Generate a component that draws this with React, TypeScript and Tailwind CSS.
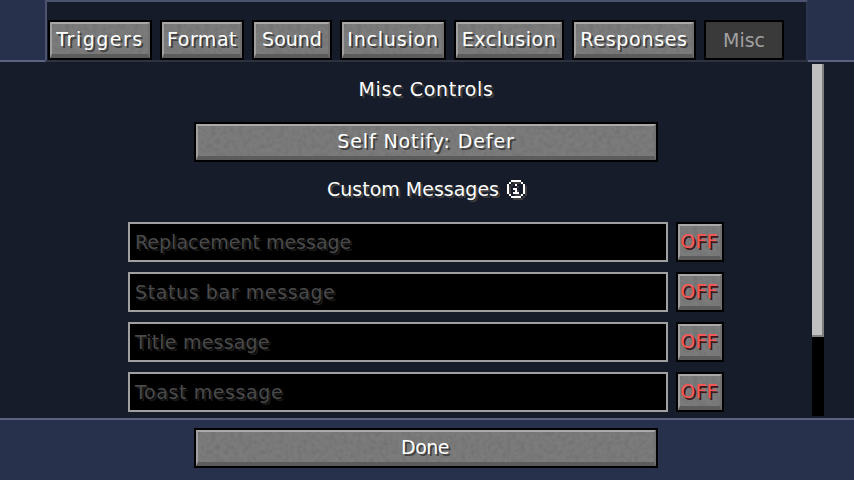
import React from 'react';

const tabs = [
  { label: 'Triggers', width: 'w-[104px]', tracking: 'tracking-[1.5px]' },
  { label: 'Format', width: 'w-[84px]', tracking: 'tracking-[0.5px]' },
  { label: 'Sound', width: 'w-[80px]', tracking: 'tracking-[0px]' },
  { label: 'Inclusion', width: 'w-[106px]', tracking: 'tracking-[0.8px]' },
  { label: 'Exclusion', width: 'w-[110px]', tracking: 'tracking-[0.55px]' },
  { label: 'Responses', width: 'w-[124px]', tracking: 'tracking-[0.7px]' },
];

const messages = [
  { label: 'Replacement message', tracking: 'tracking-[0px]' },
  { label: 'Status bar message', tracking: 'tracking-[0.6px]' },
  { label: 'Title message', tracking: 'tracking-[0.2px]' },
  { label: 'Toast message', tracking: 'tracking-[0.6px]' },
];

function Grain() {
  return (
    <svg className="absolute inset-0 w-full h-full">
      <filter id="stone">
        <feTurbulence type="fractalNoise" baseFrequency="0.22" numOctaves={2} seed={4} />
        <feColorMatrix values="0 0 0 0 0  0 0 0 0 0  0 0 0 0 0  1.6 0 0 0 -0.62" />
      </filter>
      <rect width="100%" height="100%" filter="url(#stone)" opacity="0.1" />
    </svg>
  );
}

function McButton({ className, children }: { className: string; children: React.ReactNode }) {
  return (
    <div className={`relative h-[40px] shrink-0 border-2 border-black ${className}`}>
      <div className="relative h-full bg-[#7b7b7b] border-t-2 border-l-2 border-r-2 border-b-4 border-t-[#a9a9a9] border-l-[#a0a0a0] border-r-[#717171] border-b-[#5c5c5c] flex items-center justify-center overflow-hidden">
        <Grain />
        {children}
      </div>
    </div>
  );
}

function InfoIcon() {
  // pixel ring with an i, on a 2px grid
  const ring = 'M2 0h5v1h1v1h1v5h-1v1h-1v1h-5v-1h-1v-1h-1v-5h1v-1h1zM2 1v1h-1v5h1v1h5v-1h1v-5h-1v-1z';
  const dot = 'M4 2h1v1h-1zM3 4h2v2h1v1h-3v-1h1v-1h-1z';
  return (
    <svg width="18" height="18" viewBox="0 0 9 9" shapeRendering="crispEdges" className="ml-[8px] [filter:drop-shadow(2px_2px_0_#3f3f3f)]">
      <path d={ring + dot} fill="#ffffff" fillRule="evenodd" />
    </svg>
  );
}

export default function App() {
  return (
    <div className="w-[854px] h-[480px] overflow-hidden flex flex-col bg-[#161c29] font-['DejaVu_Sans',sans-serif] text-[19px] text-white [text-shadow:2px_2px_0_#3f3f3f]">
      <header className="h-[62px] shrink-0 flex">
        <div className="w-[45px] bg-[#27314b] border-b-2 border-[#5a6280]" />
        <div className="w-[763px] bg-[#151b28] border-l-2 border-r-2 border-t-2 border-b-2 border-l-[#4b5370] border-r-[#2c3550] border-t-[#4b5370] border-b-[#2d323e] pt-[18px] pl-[1px] flex gap-[8px]">
          {tabs.map((tab) => (
            <McButton key={tab.label} className={tab.width}>
              <span className={`relative ${tab.tracking}`}>{tab.label}</span>
            </McButton>
          ))}
          <div className="w-[80px] h-[40px] border-2 border-black bg-[#3a3a3a] flex items-center justify-center text-[#a0a0a0] tracking-[0px] [text-shadow:none]">
            Misc
          </div>
        </div>
        <div className="flex-1 bg-[#27314b] border-b-2 border-[#5a6280]" />
      </header>

      <main className="h-[352px] mt-[2px] shrink-0 flex overflow-hidden">
        <div className="w-[812px] pl-[40px] flex flex-col items-center">
          <div className="h-[20px] mt-[15px] flex items-center tracking-[0.64px]">Misc Controls</div>
          <McButton className="w-[464px] mt-[23px]">
            <span className="relative tracking-[0.88px]">Self Notify: Defer</span>
          </McButton>
          <div className="h-[22px] mt-[16px] flex items-center tracking-[0px]">
            Custom Messages
            <InfoIcon />
          </div>
          <div className="mt-[22px] flex flex-col gap-[10px]">
            {messages.map((message) => (
              <div key={message.label} className="flex gap-[8px]">
                <div className={`w-[540px] h-[40px] bg-black border-2 border-[#a0a0a0] flex items-center pl-[5px] text-[#4a4a4a] ${message.tracking} [text-shadow:2px_2px_0_#1a1a1a]`}>
                  {message.label}
                </div>
                <McButton className="w-[48px]">
                  <span className="relative mr-[2px] text-[#ff5555] text-[19px] tracking-[0.2px] [text-shadow:2px_2px_0_#3f1515]">OFF</span>
                </McButton>
              </div>
            ))}
          </div>
        </div>
        <div className="w-[12px] h-full bg-black">
          <div className="h-[273px] bg-[#c0c0c0] border-r-2 border-b-2 border-[#808080]" />
        </div>
      </main>

      <footer className="flex-1 mt-[2px] bg-[#27314b] border-t-2 border-[#5a6280] pt-[8px] flex justify-center pr-[2px]">
        <McButton className="w-[464px]">
          <span className="relative mr-[2px] tracking-[-0.5px]">Done</span>
        </McButton>
      </footer>
    </div>
  );
}
